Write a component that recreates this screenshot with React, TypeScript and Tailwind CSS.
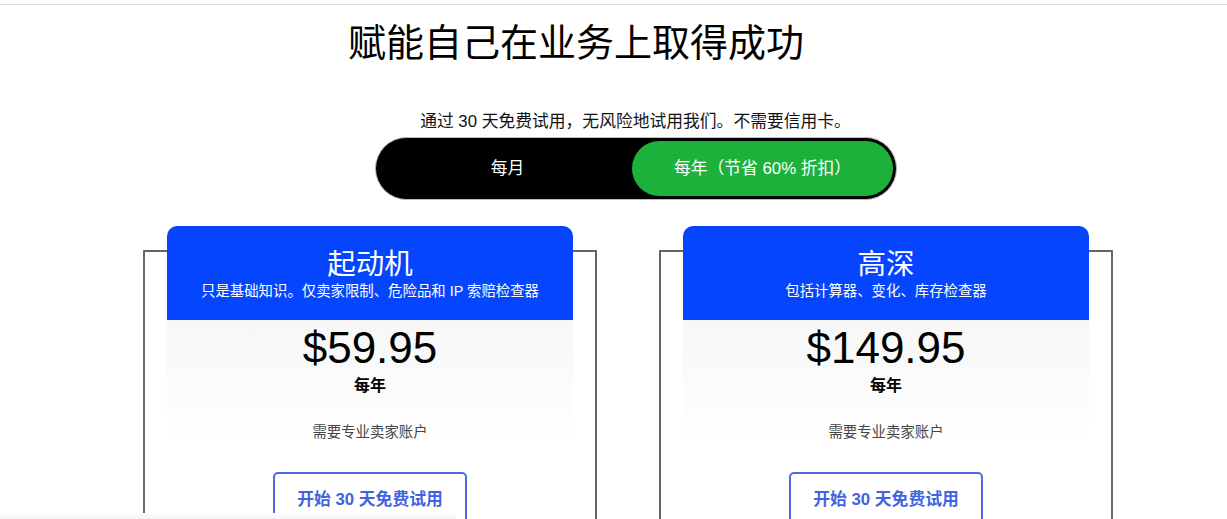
import React from "react";

const font = { fontFamily: '"Liberation Sans", "Noto Sans CJK SC", sans-serif' };

function Card({ title, sub, price }: { title: string; sub: string; price: string }) {
  return (
    <div className="w-[454px] pt-[24px]">
      <div className="border-2 border-[#666666] border-b-0 px-[22px] h-[300px]">
        <div className="-mt-[26px] h-[94px] rounded-t-[10px] bg-[#0545fd] flex flex-col items-center text-white">
          <div className="mt-[20px] text-[28.5px] leading-[36px]">{title}</div>
          <div className="text-[14.4px] leading-[18px] mt-[0px]">{sub}</div>
        </div>
        <div className="h-[126px] bg-gradient-to-b from-[#f7f7f7] to-[#ffffff] flex flex-col items-center">
          <div className="mt-[4px] text-[44px] leading-[48px] text-black">{price}</div>
          <div className="mt-[4px] text-[16px] leading-[20px] font-bold text-black">每年</div>
          <div className="mt-[27px] text-[14.4px] leading-[18px] text-[#444]">需要专业卖家账户</div>
        </div>
        <div className="flex justify-center mt-[26px]">
          <div className="w-[194px] h-[56px] border-2 border-[#4a6ae8] rounded-[5px] flex items-center justify-center text-[16.8px] font-bold text-[#4262e0]">
            开始 30 天免费试用
          </div>
        </div>
      </div>
    </div>
  );
}

export default function App() {
  return (
    <div className="w-[1227px] h-[519px] overflow-hidden bg-white relative" style={font}>
      <div className="h-[5px] border-b border-[#dcdcdc]" />
      <div className="flex justify-center pr-[75px] mt-[15px]">
        <h1 className="text-[38px] leading-[46px] text-black font-normal">赋能自己在业务上取得成功</h1>
      </div>
      <div className="flex justify-center pl-[44px] mt-[46px]">
        <p className="text-[16.8px] leading-[20px] text-[#111]">通过 30 天免费试用，无风险地试用我们。不需要信用卡。</p>
      </div>
      <div className="ml-[375px] mt-[5px] w-[522px] h-[63px] rounded-full bg-black border border-[#bbb] p-[3px] grid grid-cols-2">
        <div className="flex items-center justify-center text-white text-[16.8px]">每月</div>
        <div className="flex items-center justify-center text-white text-[16.8px] rounded-full bg-[#1bb13b] ml-[-4px]">
          每年（节省 60% 折扣）
        </div>
      </div>
      <div className="flex gap-[62px] ml-[143px] mt-[26px]">
        <Card title="起动机" sub="只是基础知识。仅卖家限制、危险品和 IP 索赔检查器" price="$59.95" />
        <Card title="高深" sub="包括计算器、变化、库存检查器" price="$149.95" />
      </div>
      <div className="absolute left-0 top-[513px] w-[456px] h-[20px] bg-gradient-to-b from-[#ffffff] to-[#dadada] rounded-tr-[4px]" />
    </div>
  );
}
